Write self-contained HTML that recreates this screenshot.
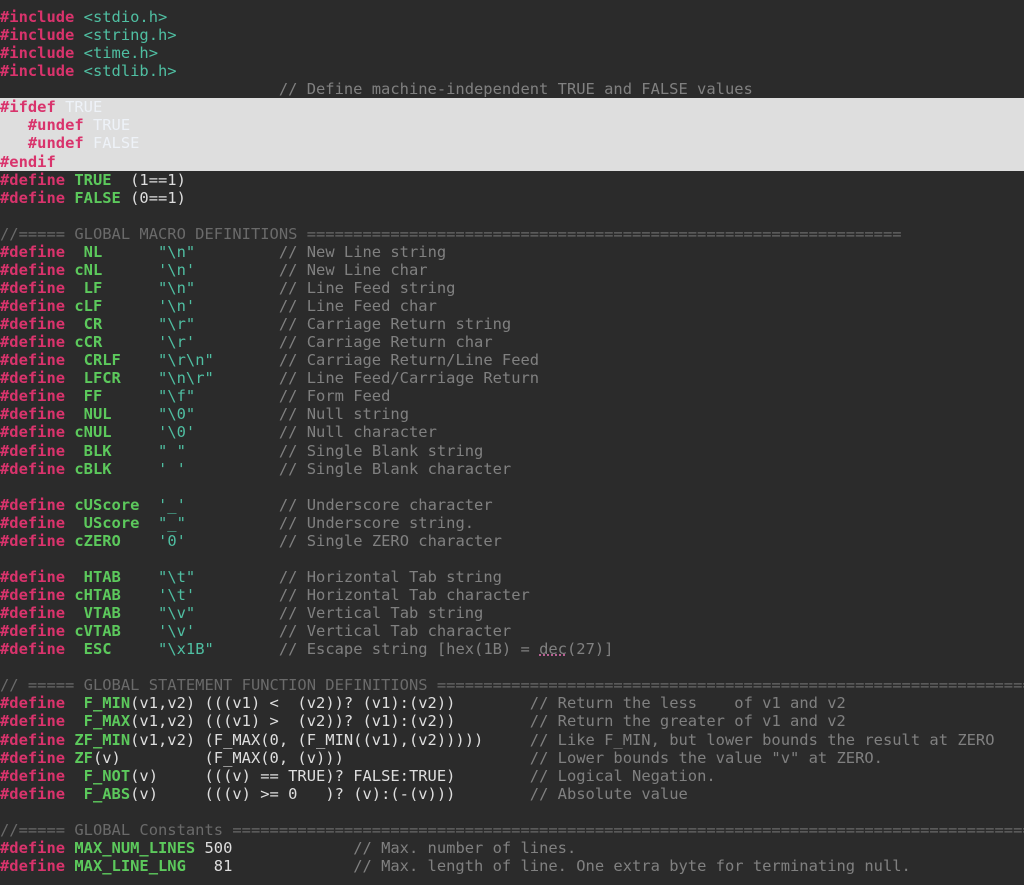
<!DOCTYPE html>
<html><head><meta charset="utf-8"><style>
html,body{margin:0;padding:0;background:#2b2b2b;width:1024px;height:885px;overflow:hidden}
pre{margin:0;padding:8px 0 0 0;font-family:"DejaVu Sans Mono","Liberation Mono",monospace;font-size:15.45px;line-height:18.07px;color:#dedede;white-space:pre}
.k{color:#d9336c;font-weight:bold}
.g{color:#5cc95c;font-weight:bold}
.s{color:#4fbfa2}
.c{color:#808080}
.h{color:#6a6a6a}
.hl{background:#dedede;display:inline-block;width:1024px}
.w{color:#eef2f8}
.u{text-decoration:underline dotted #e070b0}
</style></head><body><pre><span class="k">#include</span> <span class="s">&lt;stdio.h&gt;</span>
<span class="k">#include</span> <span class="s">&lt;string.h&gt;</span>
<span class="k">#include</span> <span class="s">&lt;time.h&gt;</span>
<span class="k">#include</span> <span class="s">&lt;stdlib.h&gt;</span>
<span class="c">                              // Define machine-independent TRUE and FALSE values</span>
<span class="hl"><span class="k">#ifdef</span> <span class="w">TRUE</span>
   <span class="k">#undef</span> <span class="w">TRUE</span>
   <span class="k">#undef</span> <span class="w">FALSE</span>
<span class="k">#endif</span></span>
<span class="k">#define</span> <span class="g">TRUE</span>  (1==1)
<span class="k">#define</span> <span class="g">FALSE</span> (0==1)

<span class="h">//===== GLOBAL MACRO DEFINITIONS ================================================================</span>
<span class="k">#define</span>  <span class="g">NL</span>      <span class="s">"\n"</span>         <span class="c">// New Line string</span>
<span class="k">#define</span> <span class="g">cNL</span>      <span class="s">'\n'</span>         <span class="c">// New Line char</span>
<span class="k">#define</span>  <span class="g">LF</span>      <span class="s">"\n"</span>         <span class="c">// Line Feed string</span>
<span class="k">#define</span> <span class="g">cLF</span>      <span class="s">'\n'</span>         <span class="c">// Line Feed char</span>
<span class="k">#define</span>  <span class="g">CR</span>      <span class="s">"\r"</span>         <span class="c">// Carriage Return string</span>
<span class="k">#define</span> <span class="g">cCR</span>      <span class="s">'\r'</span>         <span class="c">// Carriage Return char</span>
<span class="k">#define</span>  <span class="g">CRLF</span>    <span class="s">"\r\n"</span>       <span class="c">// Carriage Return/Line Feed</span>
<span class="k">#define</span>  <span class="g">LFCR</span>    <span class="s">"\n\r"</span>       <span class="c">// Line Feed/Carriage Return</span>
<span class="k">#define</span>  <span class="g">FF</span>      <span class="s">"\f"</span>         <span class="c">// Form Feed</span>
<span class="k">#define</span>  <span class="g">NUL</span>     <span class="s">"\0"</span>         <span class="c">// Null string</span>
<span class="k">#define</span> <span class="g">cNUL</span>     <span class="s">'\0'</span>         <span class="c">// Null character</span>
<span class="k">#define</span>  <span class="g">BLK</span>     <span class="s">" "</span>          <span class="c">// Single Blank string</span>
<span class="k">#define</span> <span class="g">cBLK</span>     <span class="s">' '</span>          <span class="c">// Single Blank character</span>

<span class="k">#define</span> <span class="g">cUScore</span>  <span class="s">'_'</span>          <span class="c">// Underscore character</span>
<span class="k">#define</span>  <span class="g">UScore</span>  <span class="s">"_"</span>          <span class="c">// Underscore string.</span>
<span class="k">#define</span> <span class="g">cZERO</span>    <span class="s">'0'</span>          <span class="c">// Single ZERO character</span>

<span class="k">#define</span>  <span class="g">HTAB</span>    <span class="s">"\t"</span>         <span class="c">// Horizontal Tab string</span>
<span class="k">#define</span> <span class="g">cHTAB</span>    <span class="s">'\t'</span>         <span class="c">// Horizontal Tab character</span>
<span class="k">#define</span>  <span class="g">VTAB</span>    <span class="s">"\v"</span>         <span class="c">// Vertical Tab string</span>
<span class="k">#define</span> <span class="g">cVTAB</span>    <span class="s">'\v'</span>         <span class="c">// Vertical Tab character</span>
<span class="k">#define</span>  <span class="g">ESC</span>     <span class="s">"\x1B"</span>       <span class="c">// Escape string [hex(1B) = <span class="u">dec</span>(27)]</span>

<span class="h">// ===== GLOBAL STATEMENT FUNCTION DEFINITIONS ===================================================================</span>
<span class="k">#define</span>  <span class="g">F_MIN</span>(v1,v2) (((v1) &lt;  (v2))? (v1):(v2))        <span class="c">// Return the less    of v1 and v2</span>
<span class="k">#define</span>  <span class="g">F_MAX</span>(v1,v2) (((v1) &gt;  (v2))? (v1):(v2))        <span class="c">// Return the greater of v1 and v2</span>
<span class="k">#define</span> <span class="g">ZF_MIN</span>(v1,v2) (F_MAX(0, (F_MIN((v1),(v2)))))     <span class="c">// Like F_MIN, but lower bounds the result at ZERO</span>
<span class="k">#define</span> <span class="g">ZF</span>(v)         (F_MAX(0, (v)))                    <span class="c">// Lower bounds the value "v" at ZERO.</span>
<span class="k">#define</span>  <span class="g">F_NOT</span>(v)     (((v) == TRUE)? FALSE:TRUE)        <span class="c">// Logical Negation.</span>
<span class="k">#define</span>  <span class="g">F_ABS</span>(v)     (((v) &gt;= 0   )? (v):(-(v)))        <span class="c">// Absolute value</span>

<span class="h">//===== GLOBAL Constants ==========================================================================================</span>
<span class="k">#define</span> <span class="g">MAX_NUM_LINES</span> 500             <span class="c">// Max. number of lines.</span>
<span class="k">#define</span> <span class="g">MAX_LINE_LNG</span>   81             <span class="c">// Max. length of line. One extra byte for terminating null.</span>
</pre></body></html>
